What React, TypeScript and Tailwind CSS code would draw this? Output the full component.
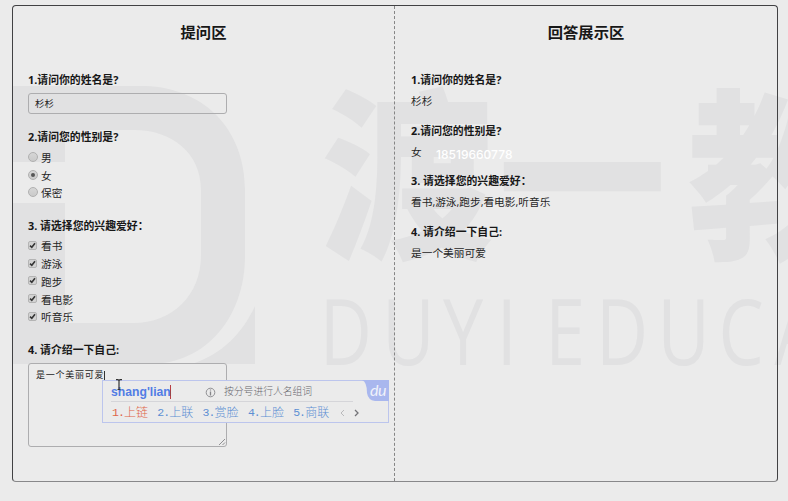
import { ReactNode } from "react";

const answers = {
  name: "杉杉",
  gender: "女",
  hobbies: ["看书", "游泳", "跑步", "看电影", "听音乐"],
  intro: "是一个美丽可爱",
};

const candidates = ["上链", "上联", "赏脸", "上脸", "商联"];

function Watermark() {
  return (
    <svg className="pointer-events-none absolute inset-0" width="788" height="501" viewBox="0 0 788 501" fill="#e1e1e2">
      <path
        fillRule="evenodd"
        d="M13 86H145C205 88 245 130 245 190V256C245 318 205 364 150 364H13V203H65V323H133C173 323 201 295 201 255V190C201 153 172 130 134 130H65V162H13Z"
      />
      <path d="M255 306V364H192C222 354 242 334 255 306Z" />
      <g fontFamily="'Noto Sans CJK SC', sans-serif" fontWeight="900" fontSize="187">
        <text transform="translate(321 245) scale(0.92 0.98)">渡</text>
        <text transform="translate(498 248) scale(0.9 0.98)">一</text>
        <text transform="translate(688 245) scale(0.93 0.98)">教</text>
      </g>
      <g fontFamily="'Open Sans', sans-serif" fontWeight="400" fontSize="92" transform="translate(0 364.500) scale(0.78 1)">
        <text x="410 490 568 637 699 764 843 921 993">DUYIEDUCA</text>
      </g>
    </svg>
  );
}

function Label({ children }: { children: ReactNode }) {
  return <h2 className="h-4 whitespace-pre text-[10.85px] leading-4 font-bold text-[#171717]">{children}</h2>;
}

function Radio({ text, checked = false }: { text: string; checked?: boolean }) {
  return (
    <label className="flex h-[17.8px] items-center gap-[3px]">
      <span className="mb-[2px] flex size-[10px] items-center justify-center rounded-full border border-[#b0b0b0] bg-gradient-to-b from-[#d6d6d6] to-[#cacaca]">
        {checked && <span className="size-1 rounded-full bg-[#555]" />}
      </span>
      <span>{text}</span>
    </label>
  );
}

function Check({ text }: { text: string }) {
  return (
    <label className="flex h-[17.8px] items-center gap-1">
      <span className="mb-[2px] flex size-[9px] items-center justify-center rounded-[2px] border border-[#b4b4b4] bg-[#d3d3d3]">
        <svg width="7" height="7" viewBox="0 0 7 7" fill="none" stroke="#363636" strokeWidth="1.6">
          <path d="M1 3.6 2.8 5.3 6 1.2" />
        </svg>
      </span>
      <span>{text}</span>
    </label>
  );
}

function Answer({ title, value }: { title: string; value: string }) {
  return (
    <section className="h-[50.7px]">
      <Label>{title}</Label>
      <p className="mt-[5px] leading-4">{value}</p>
    </section>
  );
}

function InputMethod() {
  return (
    <div className="absolute top-[380px] left-[102px] h-[43px] w-[287px] border border-[#bcc5ed] bg-[#ebebeb]">
      <div className="ml-2 flex h-[21px] w-[242px] items-center border-b border-[#d5d5d9] pt-[2px]">
        <span className="h-[14px] w-[60px] border-r border-[#b83e43] font-['Liberation_Sans'] text-[12.2px] leading-[14px] font-bold text-[#527de5]">
          shang'lian
        </span>
        <svg className="ml-[34px]" width="11" height="11" viewBox="0 0 11 11" fill="none" stroke="#858589">
          <circle cx="5.5" cy="5.5" r="4.3" strokeWidth=".9" />
          <path d="M5.5 2.5v1M5.5 4.5v4" strokeWidth="1.3" />
        </svg>
        <span className="ml-2 text-[9.8px] font-light whitespace-nowrap text-[#66666c]">按分号进行人名组词</span>
      </div>
      <div className="ml-[9px] flex h-[20px] items-center pt-[2px] font-light">
        {candidates.map((word, i) => (
          <span key={word} className={i === 0 ? "flex w-[45.3px] shrink-0 items-center text-[#df6548]" : "flex w-[45.3px] shrink-0 items-center text-[#5d8fd3]"}>
            <span className="w-3 font-['Liberation_Mono'] text-[11.5px] tracking-[-1px]">{i + 1}.</span>
            <span className="text-[12px]">{word}</span>
          </span>
        ))}
        <svg className="ml-[2px] shrink-0" width="22" height="8" viewBox="0 0 22 8" fill="none">
          <path d="M4 1 1 4l3 3" stroke="#b9b9bb" />
          <path d="m15 1 3 3-3 3" stroke="#737377" strokeWidth="1.3" />
        </svg>
      </div>
      <div className="absolute -top-px -right-px h-[21px] w-[27px]">
        <svg className="absolute inset-0" width="27" height="21" viewBox="0 0 27 21">
          <path d="M0 0H27V21H13Q6 20 5 13Q5 2 0 0Z" fill="#a9b7ee" />
        </svg>
        <span className="absolute top-[1px] left-[8px] font-['Lato'] text-[16px] leading-[18px] tracking-[-0.5px] text-[#f0f2fb] italic">du</span>
      </div>
    </div>
  );
}

export default function App() {
  return (
    <div className="relative h-[501px] w-[788px] overflow-hidden bg-[#ebebeb] pt-[5px] pl-3 font-['Open_Sans','Noto_Sans_CJK_SC',sans-serif] text-[10.7px] text-[#252525]">
      <Watermark />
      <main className="relative flex h-[477px] w-[766px] rounded-[4px] border border-[#414143] border-b-[#88888a]">
        <div className="w-[382px] border-r border-dashed border-[#858585] px-[15px]">
          <h1 className="mt-[14px] h-6 text-center text-[15.3px] leading-6 font-bold text-[#171717]">提问区</h1>
          <section className="mt-[28px]">
            <Label>1.请问你的姓名是?</Label>
            <div className="mt-[5px] flex h-[21px] w-[199px] items-center rounded-[3px] border border-[#adadaf] pt-px pl-[6px] text-[9.4px]">
              {answers.name}
            </div>
          </section>
          <section className="mt-[15px]">
            <Label>2.请问您的性别是?</Label>
            <div className="mt-[4px]">
              <Radio text="男" />
              <Radio text="女" checked />
              <Radio text="保密" />
            </div>
          </section>
          <section className="mt-[16px]">
            <Label>3. 请选择您的兴趣爱好：</Label>
            <div className="mt-[3px]">
              {answers.hobbies.map((h) => (
                <Check key={h} text={h} />
              ))}
            </div>
          </section>
          <section className="mt-[16px]">
            <Label>4. 请介绍一下自己:</Label>
            <div className="relative mt-[5px] h-[84px] w-[199px] rounded-[3px] border border-[#adadaf] pt-[5px] pl-[7px]">
              <div className="flex h-3 items-end text-[9px] leading-3 tracking-[0.75px]">
                {answers.intro}
                <span className="h-[10px] w-[5px] border-b border-l border-[#333]" />
              </div>
              <svg className="absolute right-0 bottom-0" width="8" height="8" viewBox="0 0 8 8" stroke="#77777b" strokeWidth=".8">
                <path d="M1 7 7 1M4.5 7 7 4.5" />
              </svg>
            </div>
          </section>
        </div>
        <div className="flex-1 px-4">
          <h1 className="mt-[14px] h-6 text-center text-[15.3px] leading-6 font-bold text-[#171717]">回答展示区</h1>
          <div className="mt-[28px]">
            <Answer title="1.请问你的姓名是?" value={answers.name} />
            <Answer title="2.请问您的性别是?" value={answers.gender} />
            <Answer title="3. 请选择您的兴趣爱好：" value={answers.hobbies.join(",")} />
            <Answer title="4. 请介绍一下自己:" value={answers.intro} />
          </div>
        </div>
      </main>
      <span className="absolute top-[147px] left-[436px] font-['Inter'] text-[12px] leading-4 font-medium text-white">18519660778</span>
      <InputMethod />
      <svg className="absolute top-[379px] left-[115px]" width="8" height="12" viewBox="0 0 8 12" fill="none" stroke="#333" strokeWidth="1.2">
        <path d="M1 .7h2l1 .8 1-.8h2M4 1.5v9M2.5 10.5h3" />
      </svg>
    </div>
  );
}
